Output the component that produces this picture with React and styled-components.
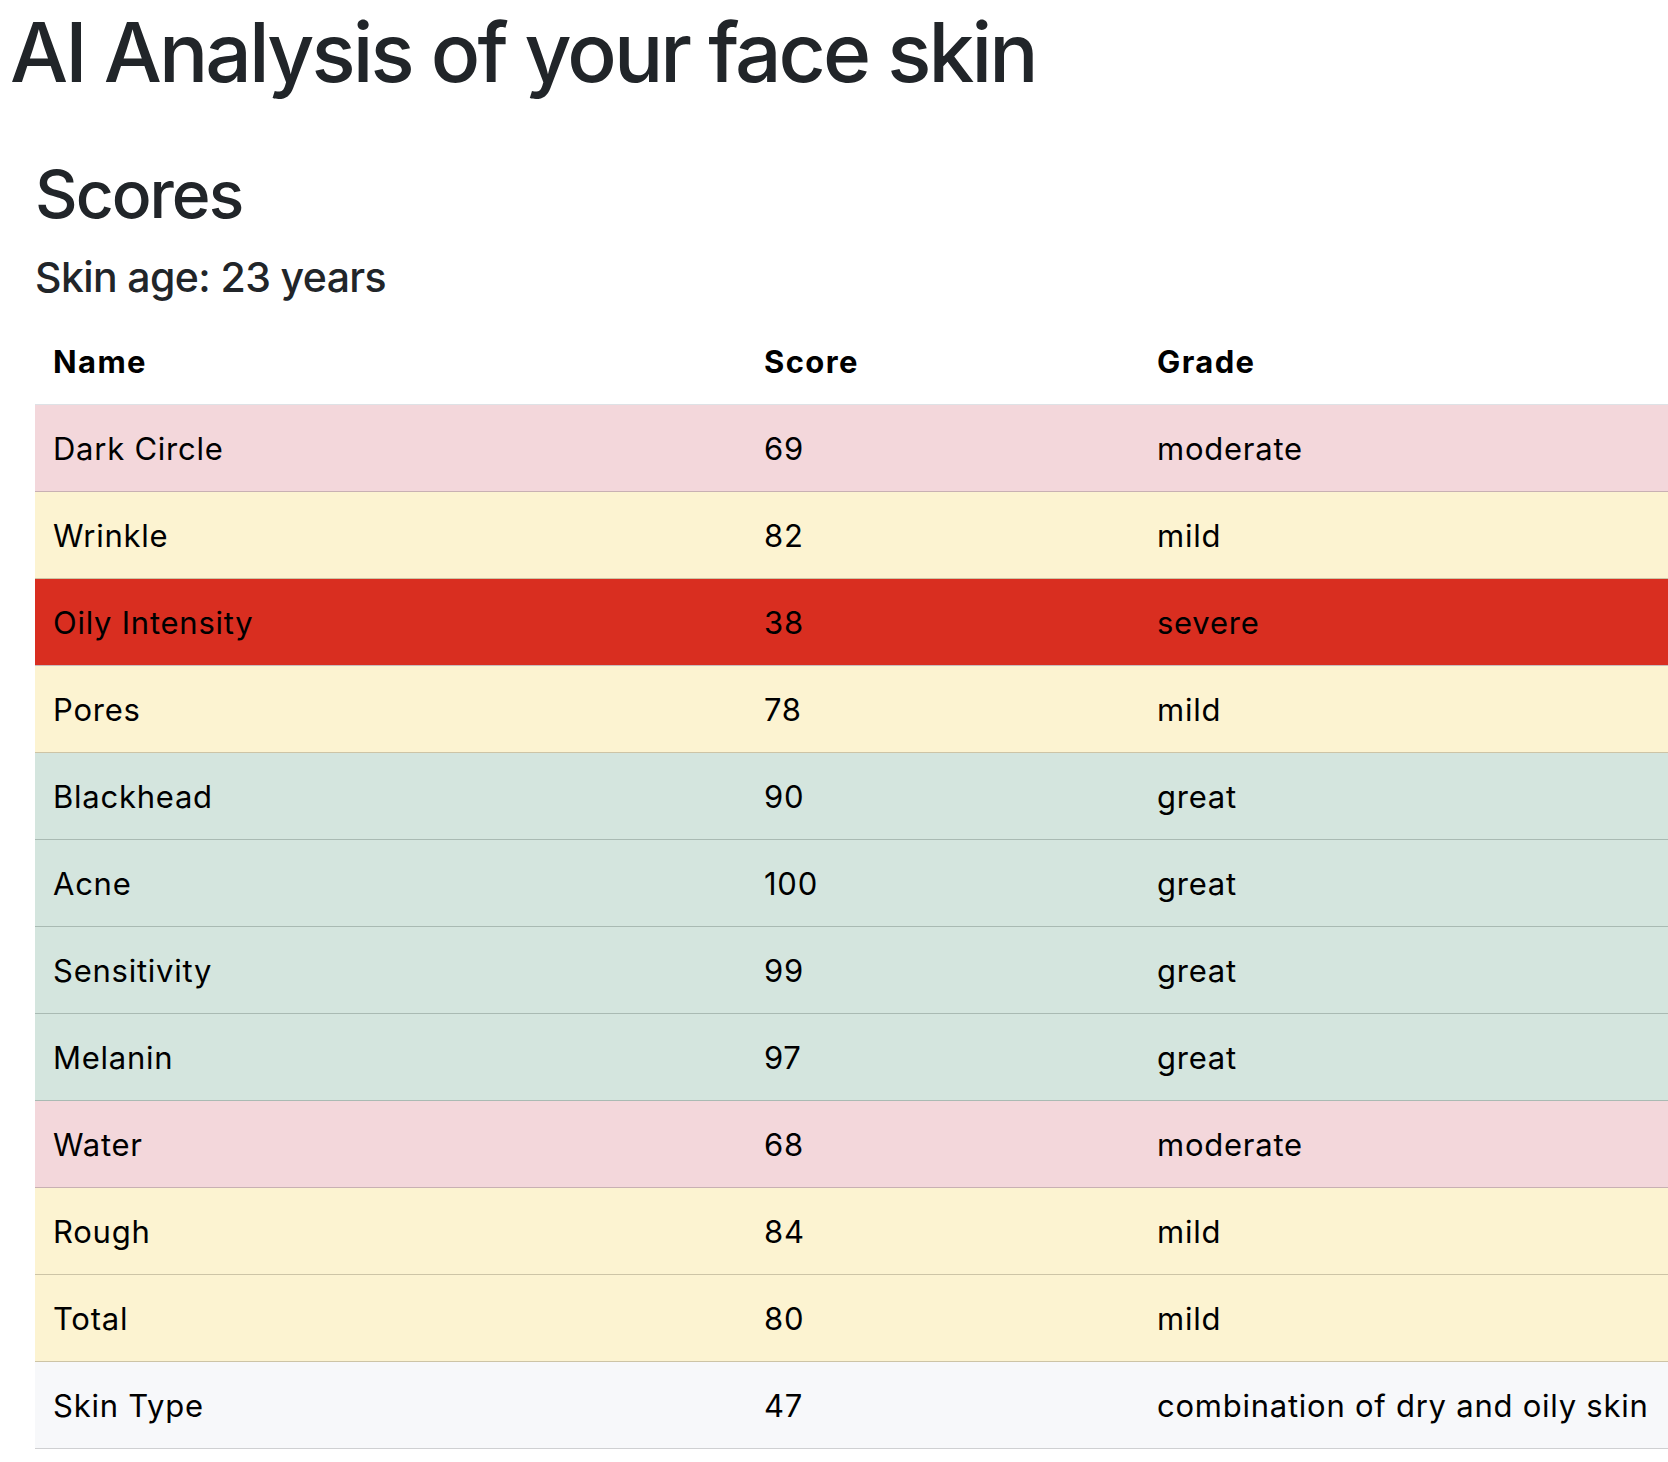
import React from "react";
import styled, { createGlobalStyle } from "styled-components";

const GlobalStyle = createGlobalStyle`
  html, body {
    margin: 0;
    padding: 0;
    background: #fff;
    overflow-x: hidden;
  }
  body {
    font-family: Inter, "Liberation Sans", Arial, sans-serif;
    color: #212529;
  }
`;

const rows = [
  { name: "Dark Circle", score: 69, grade: "moderate", tone: "danger" },
  { name: "Wrinkle", score: 82, grade: "mild", tone: "warning" },
  { name: "Oily Intensity", score: 38, grade: "severe", tone: "severe" },
  { name: "Pores", score: 78, grade: "mild", tone: "warning" },
  { name: "Blackhead", score: 90, grade: "great", tone: "success" },
  { name: "Acne", score: 100, grade: "great", tone: "success" },
  { name: "Sensitivity", score: 99, grade: "great", tone: "success" },
  { name: "Melanin", score: 97, grade: "great", tone: "success" },
  { name: "Water", score: 68, grade: "moderate", tone: "danger" },
  { name: "Rough", score: 84, grade: "mild", tone: "warning" },
  { name: "Total", score: 80, grade: "mild", tone: "warning" },
  { name: "Skin Type", score: 47, grade: "combination of dry and oily skin", tone: "light" },
];

const tones = {
  danger: { bg: "#f3d7db", border: "#c8b0b3" },
  warning: { bg: "#fcf3d1", border: "#cdc4a6" },
  severe: { bg: "#d92e20", border: "#c9bcbc" },
  success: { bg: "#d4e5de", border: "#a9bab3" },
  light: { bg: "#f7f8fa", border: "#cfd0d2" },
};

export default function App() {
  return (
    <Page>
      <GlobalStyle />
      <Title>AI Analysis of your face skin</Title>
      <Section>
        <SectionTitle>Scores</SectionTitle>
        <SkinAge>Skin age: 23 years</SkinAge>
        <ScoreTable>
          <colgroup>
            <NameCol />
            <ScoreCol />
            <col />
          </colgroup>
          <thead>
            <tr>
              <HeadCell>Name</HeadCell>
              <HeadCell>Score</HeadCell>
              <HeadCell>Grade</HeadCell>
            </tr>
          </thead>
          <tbody>
            {rows.map((row) => (
              <Row key={row.name} $tone={row.tone}>
                <Cell>{row.name}</Cell>
                <Cell>{row.score}</Cell>
                <Cell>{row.grade}</Cell>
              </Row>
            ))}
          </tbody>
        </ScoreTable>
      </Section>
    </Page>
  );
}

const Page = styled.main`
  padding-top: 3px;
`;

const Title = styled.h1`
  margin: 0;
  padding-left: 10px;
  font-size: 82px;
  font-weight: 500;
  line-height: 100px;
  letter-spacing: -2.9px;
  color: #212529;
`;

const Section = styled.section`
  padding: 51px 0 0 35px;
`;

const SectionTitle = styled.h2`
  margin: 0 0 18px;
  font-size: 66px;
  font-weight: 500;
  line-height: 80px;
  letter-spacing: -2px;
  color: #212529;
`;

const SkinAge = styled.h5`
  margin: 0 0 16px;
  font-size: 41px;
  font-weight: 500;
  line-height: 50px;
  letter-spacing: -0.6px;
  color: #212529;
`;

const ScoreTable = styled.table`
  width: 100%;
  border-collapse: collapse;
  table-layout: fixed;
  font-size: 31px;
  line-height: 46px;
  color: #000;
`;

const NameCol = styled.col`
  width: 711px;
`;

const ScoreCol = styled.col`
  width: 393px;
`;

const HeadCell = styled.th`
  text-align: left;
  font-weight: 700;
  letter-spacing: 1.4px;
  padding: 21px 18px 19px;
  border-bottom: 1px solid #dee2e6;
  white-space: nowrap;
`;

const Row = styled.tr`
  background: ${({ $tone }) => tones[$tone].bg};

  & > td {
    border-bottom: 1px solid ${({ $tone }) => tones[$tone].border};
  }
`;

const Cell = styled.td`
  padding: 21px 18px 19px;
  letter-spacing: 0.75px;
  white-space: nowrap;
`;
